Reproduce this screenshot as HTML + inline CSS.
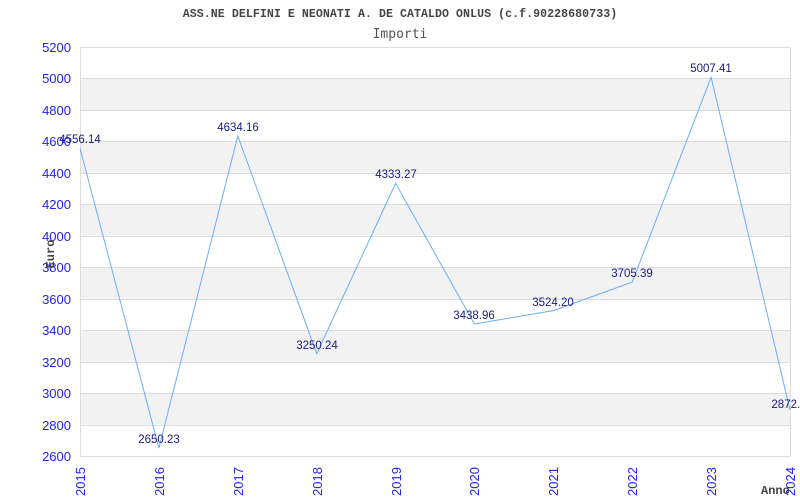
<!DOCTYPE html>
<html><head><meta charset="utf-8"><style>
html,body{margin:0;padding:0;background:#fff;width:800px;height:500px;overflow:hidden}
svg{display:block}
</style></head><body>
<svg width="800" height="500" xmlns="http://www.w3.org/2000/svg">
<g fill="#f2f2f2">
<rect x="80" y="78.5" width="710" height="31.5"/>
<rect x="80" y="141.4" width="710" height="31.5"/>
<rect x="80" y="204.4" width="710" height="31.5"/>
<rect x="80" y="267.3" width="710" height="31.5"/>
<rect x="80" y="330.2" width="710" height="31.5"/>
<rect x="80" y="393.1" width="710" height="31.5"/>
</g>
<g stroke="#dcdcdc" stroke-width="1">
<line x1="80" y1="47.5" x2="790" y2="47.5"/>
<line x1="80" y1="78.5" x2="790" y2="78.5"/>
<line x1="80" y1="110.5" x2="790" y2="110.5"/>
<line x1="80" y1="141.5" x2="790" y2="141.5"/>
<line x1="80" y1="173.5" x2="790" y2="173.5"/>
<line x1="80" y1="204.5" x2="790" y2="204.5"/>
<line x1="80" y1="236.5" x2="790" y2="236.5"/>
<line x1="80" y1="267.5" x2="790" y2="267.5"/>
<line x1="80" y1="299.5" x2="790" y2="299.5"/>
<line x1="80" y1="330.5" x2="790" y2="330.5"/>
<line x1="80" y1="362.5" x2="790" y2="362.5"/>
<line x1="80" y1="393.5" x2="790" y2="393.5"/>
<line x1="80" y1="425.5" x2="790" y2="425.5"/>
<line x1="80" y1="456.5" x2="790" y2="456.5"/>
<line x1="80.5" y1="47" x2="80.5" y2="457"/>
<line x1="790.5" y1="47" x2="790.5" y2="457"/>
</g>
<polyline fill="none" stroke="#6aaef5" stroke-width="1" points="80,148.3 158.9,448.1 237.8,136 316.7,353.7 395.6,183.3 474.4,324 553.3,310.6 632.2,282.1 711.1,77.3 790,410"/>
<g font-family="Liberation Sans, sans-serif" font-size="13" fill="#2222ee" text-anchor="end">
<text x="71" y="52">5200</text><text x="71" y="83">5000</text><text x="71" y="115">4800</text>
<text x="71" y="146">4600</text><text x="71" y="178">4400</text><text x="71" y="209">4200</text>
<text x="71" y="241">4000</text><text x="71" y="272">3800</text><text x="71" y="304">3600</text>
<text x="71" y="335">3400</text><text x="71" y="367">3200</text><text x="71" y="398">3000</text>
<text x="71" y="430">2800</text><text x="71" y="461">2600</text>
</g>
<g font-family="Liberation Sans, sans-serif" font-size="13" fill="#2222ee">
<text transform="translate(85,496) rotate(-90)">2015</text>
<text transform="translate(164,496) rotate(-90)">2016</text>
<text transform="translate(243,496) rotate(-90)">2017</text>
<text transform="translate(322,496) rotate(-90)">2018</text>
<text transform="translate(401,496) rotate(-90)">2019</text>
<text transform="translate(479,496) rotate(-90)">2020</text>
<text transform="translate(558,496) rotate(-90)">2021</text>
<text transform="translate(637,496) rotate(-90)">2022</text>
<text transform="translate(716,496) rotate(-90)">2023</text>
<text transform="translate(795,496) rotate(-90)">2024</text>
</g>
<g font-family="Liberation Sans, sans-serif" font-size="11.5" fill="#1a1a80" text-anchor="middle">
<text x="80" y="143">4556.14</text>
<text x="159" y="443">2650.23</text>
<text x="238" y="131">4634.16</text>
<text x="317" y="349">3250.24</text>
<text x="396" y="178">4333.27</text>
<text x="474" y="319">3438.96</text>
<text x="553" y="306">3524.20</text>
<text x="632" y="277">3705.39</text>
<text x="711" y="72">5007.41</text>
<text x="789" y="408">2872.0</text>
</g>
<text x="400" y="17" font-family="Liberation Mono, monospace" font-size="11.6" font-weight="bold" fill="#444" letter-spacing="0.05" text-anchor="middle">ASS.NE DELFINI E NEONATI A. DE CATALDO ONLUS (c.f.90228680733)</text>
<text x="400" y="38" font-family="DejaVu Sans Mono, monospace" font-size="13" fill="#555" text-anchor="middle">Importi</text>
<text transform="translate(54,254) rotate(-90)" font-family="Liberation Mono, monospace" font-size="12" font-weight="bold" fill="#444" text-anchor="middle">Euro</text>
<text x="761" y="494" font-family="Liberation Mono, monospace" font-size="12" font-weight="bold" fill="#444">Anno</text>
</svg>
</body></html>
